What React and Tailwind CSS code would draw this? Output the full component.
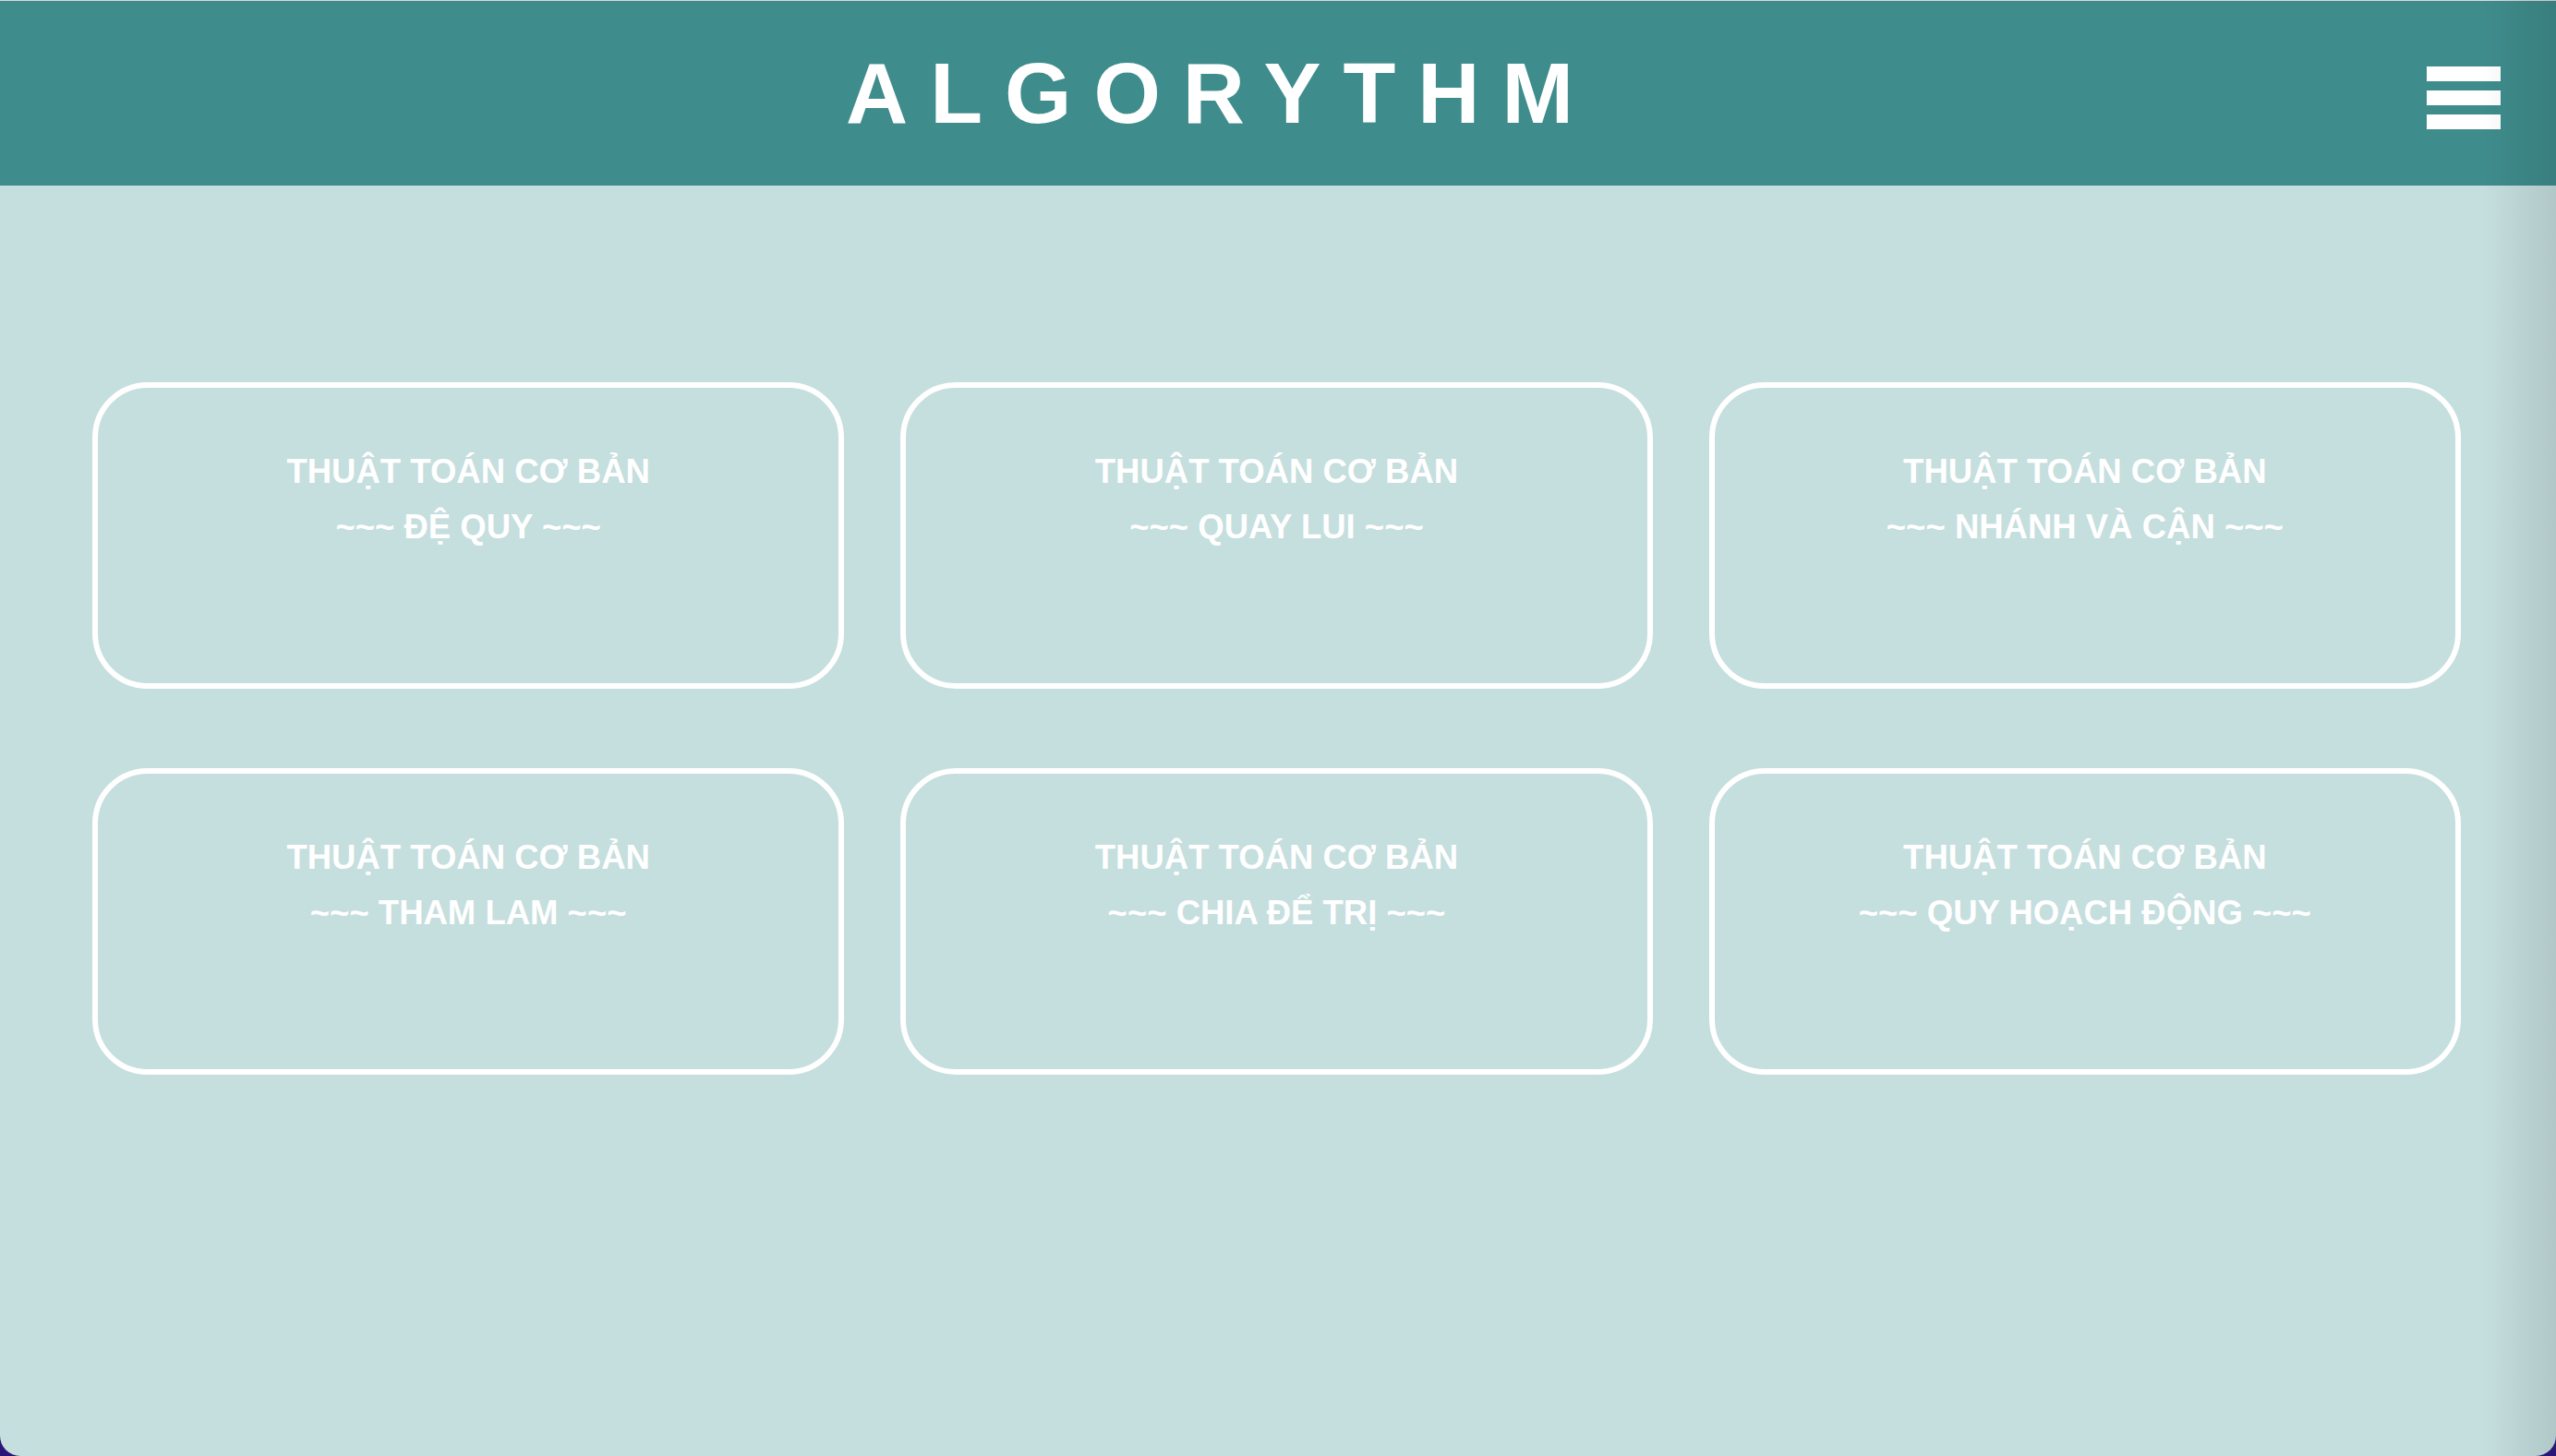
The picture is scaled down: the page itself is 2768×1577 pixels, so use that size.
import React from 'react';

const topics = ['ĐỆ QUY', 'QUAY LUI', 'NHÁNH VÀ CẬN', 'THAM LAM', 'CHIA ĐỂ TRỊ', 'QUY HOẠCH ĐỘNG'];

const TopicCard = ({ name }) => (
  <div className="h-[332px] rounded-[60px] border-[6px] border-white pt-[61px] text-center text-[36.5px] font-bold leading-[60px] text-white">
    <div>THUẬT TOÁN CƠ BẢN</div>
    <div>~~~ {name} ~~~</div>
  </div>
);

const App = () => {
  return (
    <div className="h-screen w-full bg-[#2a1677]" style={{ fontFamily: '"Liberation Sans", Arial, sans-serif' }}>
      <div className="relative h-full w-full overflow-hidden rounded-b-[22px] bg-[#c5dede]">
        <header className="flex h-[201px] items-center border-t border-[#dcd8dc] bg-[#3f8c8c]">
          <h1 className="flex-1 pl-[16px] text-center text-[93px] font-bold leading-none tracking-[24px] text-white">
            ALGORYTHM
          </h1>
          <button className="mr-[60px] mt-[10px] flex w-[80px] flex-col gap-[10px]">
            <span className="block h-[16px] w-full bg-white" />
            <span className="block h-[16px] w-full bg-white" />
            <span className="block h-[16px] w-full bg-white" />
          </button>
        </header>

        <main className="grid grid-cols-3 gap-x-[61px] gap-y-[86px] pl-[100px] pr-[103px] pt-[213px]">
          {topics.map((t) => (
            <TopicCard key={t} name={t} />
          ))}
        </main>

        <div className="pointer-events-none absolute bottom-0 right-0 top-0 w-[80px] bg-gradient-to-l from-black/10 to-transparent" />
      </div>
    </div>
  );
};

export default App;
